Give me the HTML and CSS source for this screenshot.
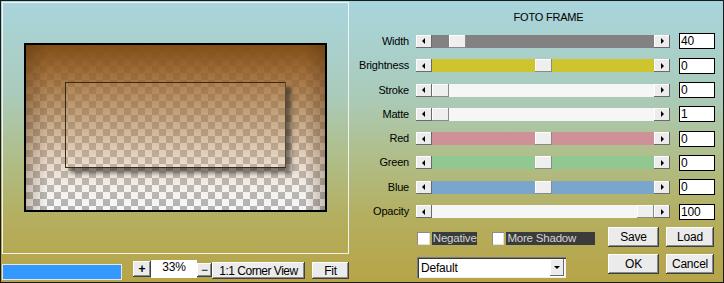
FILE: index.html
```html
<!DOCTYPE html>
<html>
<head>
<meta charset="utf-8">
<link rel="stylesheet" href="styles.css">
</head>
<body>
<div class="dlg">
  <div class="left">
    <div class="preview">
      <div class="img">
        <div class="inner"></div>
      </div>
    </div>
    <div class="bar">
      <div class="progress"></div>
      <div class="btn plus">+</div>
      <div class="zoomval">33%</div>
      <div class="btn minus">−</div>
      <div class="btn corner">1:1 Corner View</div>
      <div class="btn fit">Fit</div>
    </div>
  </div>
  <div class="right">
    <div class="title">FOTO FRAME</div>
    <div class="rows">
      <div class="row"><div class="lbl">Width</div><div class="slider"><div class="sbtn"><span class="al"></span></div><div class="track t-gray"><div class="thumb" style="margin-left:17px"></div></div><div class="sbtn"><span class="ar"></span></div></div><div class="val">40</div></div>
      <div class="row"><div class="lbl">Brightness</div><div class="slider"><div class="sbtn"><span class="al"></span></div><div class="track t-yellow"><div class="thumb" style="margin-left:103px"></div></div><div class="sbtn"><span class="ar"></span></div></div><div class="val">0</div></div>
      <div class="row"><div class="lbl">Stroke</div><div class="slider"><div class="sbtn"><span class="al"></span></div><div class="track t-white"><div class="thumb" style="margin-left:0px"></div></div><div class="sbtn"><span class="ar"></span></div></div><div class="val">0</div></div>
      <div class="row"><div class="lbl">Matte</div><div class="slider"><div class="sbtn"><span class="al"></span></div><div class="track t-white"><div class="thumb" style="margin-left:0px"></div></div><div class="sbtn"><span class="ar"></span></div></div><div class="val">1</div></div>
      <div class="row"><div class="lbl">Red</div><div class="slider"><div class="sbtn"><span class="al"></span></div><div class="track t-red"><div class="thumb" style="margin-left:103px"></div></div><div class="sbtn"><span class="ar"></span></div></div><div class="val">0</div></div>
      <div class="row"><div class="lbl">Green</div><div class="slider"><div class="sbtn"><span class="al"></span></div><div class="track t-green"><div class="thumb" style="margin-left:103px"></div></div><div class="sbtn"><span class="ar"></span></div></div><div class="val">0</div></div>
      <div class="row"><div class="lbl">Blue</div><div class="slider"><div class="sbtn"><span class="al"></span></div><div class="track t-blue"><div class="thumb" style="margin-left:103px"></div></div><div class="sbtn"><span class="ar"></span></div></div><div class="val">0</div></div>
      <div class="row"><div class="lbl">Opacity</div><div class="slider"><div class="sbtn"><span class="al"></span></div><div class="track t-white"><div class="thumb" style="margin-left:205px"></div></div><div class="sbtn"><span class="ar"></span></div></div><div class="val">100</div></div>
    </div>
    <div class="bottom">
      <div class="bleft">
        <div class="checks">
          <div class="cbox"></div><div class="clabel neg">Negative</div>
          <div class="cbox cb2"></div><div class="clabel more">More Shadow</div>
        </div>
        <div class="select">
          <div class="seltext">Default</div>
          <div class="selbtn"><span class="ad"></span></div>
        </div>
      </div>
      <div class="bright">
        <div class="btn b1">Save</div>
        <div class="btn b2">Load</div>
        <div class="btn b1">OK</div>
        <div class="btn b2">Cancel</div>
      </div>
    </div>
  </div>
</div>
</body>
</html>
```
FILE: styles.css
```css
* { box-sizing: border-box; }
html, body { margin: 0; padding: 0; }
body {
  font-family: "Liberation Sans", Arial, sans-serif;
  font-size: 11px;
  letter-spacing: -0.2px;
  color: #000;
}
.dlg {
  width: 724px;
  height: 283px;
  border: 1px solid #1a1a1a;
  display: flex;
  background: linear-gradient(to bottom, #a8d5dd 0%, #aacbbb 33%, #afc090 52%, #b4ae5e 78%, #b7a447 100%);
  overflow: hidden;
}
.left { width: 348px; display: flex; flex-direction: column; }
.preview {
  margin-left: 1px;
  margin-top: 1px;
  width: 347px;
  height: 252px;
  border: 1px solid #f2f2f2;
  padding: 40px 0 0 21px;
}
.img {
  width: 303px;
  height: 169px;
  border: 2px solid #000;
  padding: 37px 0 0 39px;
  background:
    linear-gradient(to right, rgba(70,40,10,0.28), rgba(70,40,10,0) 7%, rgba(70,40,10,0) 93%, rgba(70,40,10,0.28)),
    linear-gradient(to bottom, rgba(130,78,22,1) 0%, rgba(150,95,38,0.88) 18%, rgba(165,115,60,0.62) 45%, rgba(200,155,110,0.4) 68%, rgba(230,205,180,0.18) 86%, rgba(255,255,255,0) 100%),
    repeating-conic-gradient(#b3b3b3 0 25%, #f7f7f7 0 50%) 0 0 / 14px 14px;
}
.inner {
  width: 221px;
  height: 86px;
  border: 1px solid #3a2a14;
  border-right-color: #5a4a34;
  background: rgba(255,235,210,0.06);
  box-shadow: 5px 5px 4px rgba(30,30,30,0.55);
}
.bar { display: flex; align-items: flex-start; height: 27px; }
.progress {
  margin-left: 1px;
  margin-top: 10px;
  width: 120px;
  height: 16px;
  background: #3399ff;
  border: 1px solid #e6e6e6;
}
.btn {
  background: #ebebeb;
  box-shadow: inset -1px -1px #404040, inset 1px 1px #ffffff, inset -2px -2px #8a8a8a;
  display: flex;
  align-items: center;
  justify-content: center;
  font-size: 12px;
}
.plus { margin-left: 11px; margin-top: 7px; width: 18px; height: 16px; font-weight: bold; font-size: 12px; }
.zoomval {
  margin-top: 6px;
  width: 46px;
  height: 18px;
  background: #fff;
  text-align: center;
  line-height: 14px;
  font-size: 12px;
}
.minus { margin-top: 9px; width: 15px; height: 14px; font-size: 12px; }
.corner { margin-top: 8px; width: 93px; height: 17px; font-size: 12px; letter-spacing: -0.5px; }
.fit { margin-left: 7px; margin-top: 8px; width: 37px; height: 17px; font-size: 12px; }

.right { flex: 1; display: flex; flex-direction: column; }
.title {
  margin-left: 67px;
  width: 265px;
  height: 28.3px;
  padding-top: 10px;
  text-align: center;
  line-height: 13px;
}
.row { display: flex; align-items: center; height: 24.3px; }
.lbl { width: 60px; text-align: right; line-height: 13px; }
.slider { margin-left: 7px; width: 254px; height: 13px; display: flex; }
.sbtn {
  width: 16px;
  height: 13px;
  background: #ececec;
  box-shadow: inset -1px -1px #6a6a6a, inset 1px 1px #ffffff;
  display: flex;
  align-items: center;
  justify-content: center;
}
.al { width: 0; height: 0; border-top: 3px solid transparent; border-bottom: 3px solid transparent; border-right: 3px solid #000; margin-right: 2px; }
.ar { width: 0; height: 0; border-top: 3px solid transparent; border-bottom: 3px solid transparent; border-left: 3px solid #000; margin-left: 1px; }
.track { width: 222px; height: 13px; display: flex; }
.thumb {
  width: 17px;
  height: 13px;
  background: #efefef;
  box-shadow: inset -1px -1px #8a8a8a, inset 1px 1px #ffffff;
}
.t-gray { background: #828282; }
.t-yellow { background: #cdc42e; }
.t-white { background: #f6f6f6; }
.t-red { background: #cf9198; }
.t-green { background: #91c891; }
.t-blue { background: #7aa5cc; }
.val {
  margin-left: 9px;
  width: 36px;
  height: 16px;
  border: 1px solid #000;
  background: #fff;
  padding-left: 1px;
  line-height: 14px;
  font-size: 12px;
}
.bottom { display: flex; }
.bleft { margin-left: 68px; width: 178px; display: flex; flex-direction: column; }
.checks { margin-top: 8px; height: 13px; display: flex; }
.cbox {
  width: 13px;
  height: 13px;
  background: #fff;
  box-shadow: inset 1px 1px #8a8a8a, inset -1px -1px #e0e0e0;
}
.cb2 { margin-left: 15px; }
.clabel {
  margin-left: 2px;
  height: 13px;
  line-height: 13px;
  background: #3b3b3b;
  color: #d4d4d4;
  padding-left: 1px;
  font-size: 11.5px;
}
.neg { width: 45px; }
.more { width: 90px; }
.select {
  margin-top: 12px;
  width: 149px;
  height: 21px;
  background: #fff;
  box-shadow: inset 1px 1px #7a7a7a, inset 2px 2px #3a3a3a, inset -1px -1px #f0f0f0;
  display: flex;
  align-items: center;
}
.seltext { flex: 1; padding-left: 4px; font-size: 12px; line-height: 14px; padding-top: 1px; }
.selbtn {
  width: 14px;
  height: 17px;
  margin-right: 2px;
  background: #ececec;
  box-shadow: inset -1px -1px #6a6a6a, inset 1px 1px #ffffff;
  display: flex;
  align-items: center;
  justify-content: center;
}
.ad { width: 0; height: 0; border-left: 3px solid transparent; border-right: 3px solid transparent; border-top: 3px solid #000; }
.bright {
  margin-left: 13px;
  margin-top: 3px;
  display: grid;
  grid-template-columns: 51px 48px;
  grid-auto-rows: 20px;
  column-gap: 7px;
  row-gap: 7px;
}
```
